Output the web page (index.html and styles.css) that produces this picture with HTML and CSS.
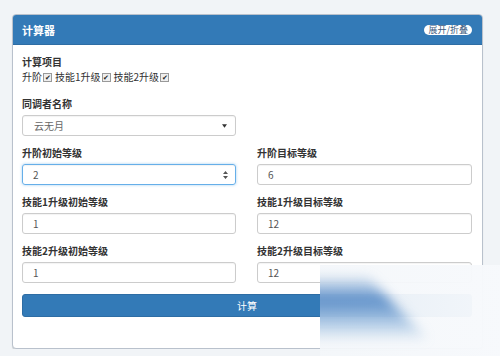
FILE: index.html
```html
<!DOCTYPE html>
<html lang="zh-CN">
<head>
  <meta charset="UTF-8" />
  <title>计算器</title>
  <link rel="stylesheet" href="styles.css">
</head>
<body>

<div class="panel">
  <div class="panel-head">
    <span class="title">计算器</span>
    <span class="toggle">展开/折叠</span>
  </div>
  <div class="panel-body">
    <div class="label">计算项目</div>
    <div class="checks">
      <span>升阶<i class="box">✔</i></span>
      <span>技能1升级<i class="box">✔</i></span>
      <span>技能2升级<i class="box">✔</i></span>
    </div>

    <div class="group half">
      <div class="label">同调者名称</div>
      <div class="field select">
        <span>云无月</span>
        <svg width="5" height="4" viewBox="0 0 6 4"><path d="M0 0h6L3 4z" fill="#333"/></svg>
      </div>
    </div>

    <div class="grid">
      <div class="group">
        <div class="label">升阶初始等级</div>
        <div class="field focus">
          <span>2</span>
          <svg width="7" height="10" viewBox="0 0 7 10"><path d="M3.5 1L6 4H1z M3.5 9L1 6h5z" fill="#555"/></svg>
        </div>
      </div>
      <div class="group">
        <div class="label">升阶目标等级</div>
        <div class="field"><span>6</span></div>
      </div>
      <div class="group">
        <div class="label">技能1升级初始等级</div>
        <div class="field"><span>1</span></div>
      </div>
      <div class="group">
        <div class="label">技能1升级目标等级</div>
        <div class="field"><span>12</span></div>
      </div>
      <div class="group">
        <div class="label">技能2升级初始等级</div>
        <div class="field"><span>1</span></div>
      </div>
      <div class="group">
        <div class="label">技能2升级目标等级</div>
        <div class="field"><span>12</span></div>
      </div>
    </div>

    <button class="calc">计算</button>
  </div>
</div>

<div class="watermark">
  <div class="wedge"><div class="shape"></div></div>
</div>

</body>
</html>
```

FILE: styles.css
```css
body {
  margin: 0;
  background: #f1f4f7;
  font-family: "Microsoft YaHei", "Noto Sans CJK SC", "Noto Sans", sans-serif;
  color: #333;
  font-size: 10px;
}
.panel {
  margin: 14px 0 0 12px;
  width: 469px;
  height: 333px;
  background: #fff;
  border: 1px solid #b9c1cc;
  border-radius: 4px;
  box-shadow: 0 1px 1px rgba(0,0,0,0.15);
  overflow: hidden;
}
.panel-head {
  height: 29px;
  background: #337ab7;
  display: flex;
  align-items: center;
  justify-content: space-between;
  padding: 0 9px;
  border-bottom: 1px solid #2e6da4;
}
.title {
  color: #fff;
  font-weight: bold;
  font-size: 11px;
}
.toggle {
  background: #fff;
  color: #3d5a80;
  font-size: 9px;
  line-height: 10px;
  padding: 0 4px;
  border-radius: 6px;
  margin-right: 1px;
}
.panel-body {
  padding: 10px 10px 0 9px;
}
.label {
  font-weight: bold;
  font-size: 10px;
  line-height: 14px;
}
.checks {
  display: flex;
  gap: 3px;
  line-height: 16px;
  margin-bottom: 12px;
}
.box {
  font-style: normal;
  display: inline-block;
  width: 7px;
  height: 7px;
  line-height: 7px;
  font-size: 7px;
  text-align: center;
  border: 1px solid #999;
  background: #eee;
  color: #222;
  margin-left: 1px;
  vertical-align: 1px;
}
.group {
  margin-bottom: 10px;
}
.group .label {
  margin-bottom: 4px;
}
.half {
  width: 214px;
}
.grid {
  display: grid;
  grid-template-columns: 214px 215px;
  column-gap: 21px;
}
.field {
  height: 19px;
  border: 1px solid #ccc;
  border-radius: 3px;
  padding: 0 8px 0 10px;
  display: flex;
  align-items: center;
  justify-content: space-between;
  color: #555;
  font-size: 10px;
  box-shadow: inset 0 1px 1px rgba(0,0,0,0.05);
}
.select {
  color: #666;
}
.select span {
  padding-left: 1px;
}
.field.focus {
  border-color: #66afe9;
  box-shadow: inset 0 1px 1px rgba(0,0,0,0.05), 0 0 3px rgba(102,175,233,0.6);
  padding-right: 6px;
}
.calc {
  display: block;
  width: 450px;
  height: 23px;
  margin-top: 1px;
  background: #337ab7;
  border: 1px solid #2e6da4;
  border-radius: 3px;
  color: #fff;
  font-family: inherit;
  font-size: 10px;
  cursor: pointer;
}
.watermark {
  position: absolute;
  left: 320px;
  top: 265px;
  width: 180px;
  height: 91px;
  background: linear-gradient(90deg, rgba(244,247,250,0.92), rgba(247,249,252,0.98));
  overflow: hidden;
}
.wedge {
  position: absolute;
  left: -20px;
  top: 12px;
  width: 130px;
  height: 64px;
  filter: blur(6px);
}
.shape {
  width: 100%;
  height: 100%;
  background: linear-gradient(180deg, rgba(130,170,210,0.15), rgba(60,120,190,0.8) 35%, rgba(110,160,210,0.45) 75%, rgba(230,238,246,0));
  clip-path: polygon(0 0, 52% 0, 100% 100%, 0 100%);
}
```
